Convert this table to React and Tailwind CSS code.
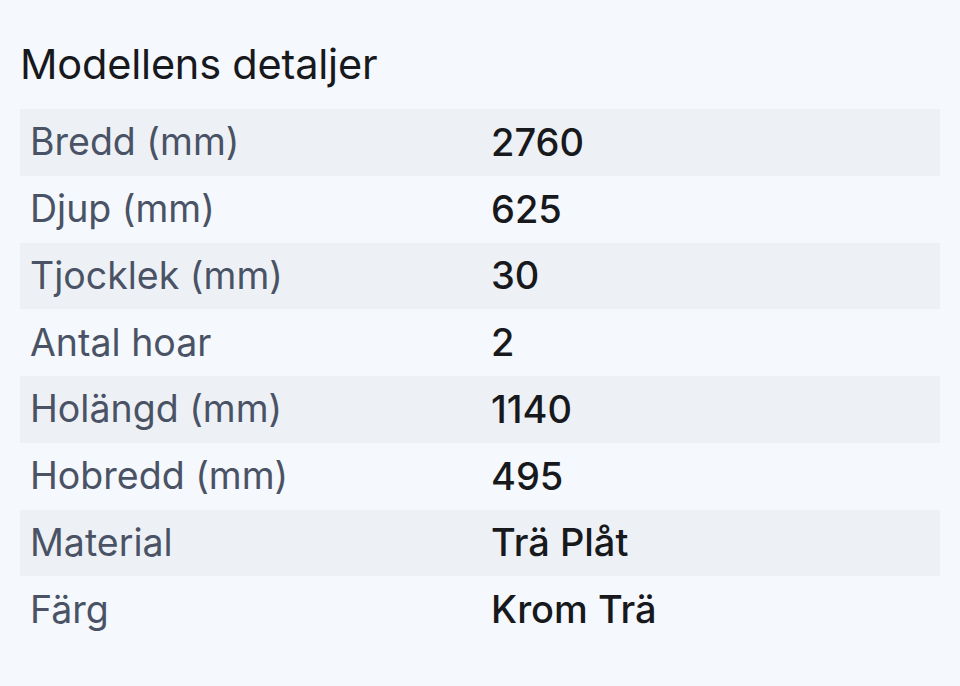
import React from "react";

const rows = [
  ["Bredd (mm)", "2760"],
  ["Djup (mm)", "625"],
  ["Tjocklek (mm)", "30"],
  ["Antal hoar", "2"],
  ["Holängd (mm)", "1140"],
  ["Hobredd (mm)", "495"],
  ["Material", "Trä Plåt"],
  ["Färg", "Krom Trä"],
];

export default function App() {
  return (
    <div
      className="min-h-[686px] w-[960px] bg-[#f5f8fc] px-5 pt-[38px]"
      style={{ fontFamily: "Inter, 'Noto Sans', sans-serif" }}
    >
      <h2 className="text-[41.5px] leading-[52px] text-[#17191c] tracking-[-0.2px]">
        Modellens detaljer
      </h2>
      <div className="mt-[19px]">
        {rows.map(([label, value], i) => (
          <div
            key={label}
            className={
              "flex h-[66.75px] items-center " +
              (i % 2 === 0 ? "bg-[#edf1f6]" : "")
            }
          >
            <div className="w-[471px] pl-[10px] text-[37.5px] text-[#4a5365]">
              {label}
            </div>
            <div className="text-[38px] font-medium text-[#17191c]">
              {value}
            </div>
          </div>
        ))}
      </div>
    </div>
  );
}
